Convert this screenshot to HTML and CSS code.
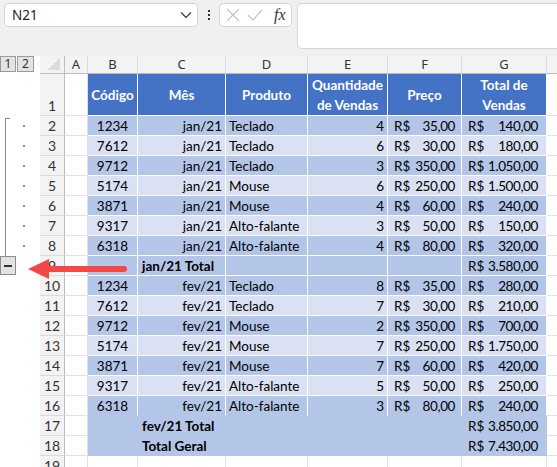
FILE: index.html
```html
<!DOCTYPE html>
<html lang="pt-BR">
<head>
  <meta charset="UTF-8">
  <meta name="viewport" content="width=device-width, initial-scale=1.0">
  <title>Vendas - Subtotais</title>
  <link rel="stylesheet" href="styles.css">
</head>
<body>
  <div class="topbar">
    <div class="namebox">
      <span>N21</span>
      <svg class="chev" width="12" height="8" viewBox="0 0 12 8"><path d="M1 1.5 L6 6.5 L11 1.5" fill="none" stroke="#333" stroke-width="1.2"/></svg>
    </div>
    <div class="vdots"><i></i><i></i><i></i></div>
    <div class="fxbox">
      <svg width="14" height="14" viewBox="0 0 14 14"><path d="M1 1 L13 13 M13 1 L1 13" stroke="#c4c4c4" stroke-width="1.2"/></svg>
      <svg width="16" height="14" viewBox="0 0 16 14"><path d="M1 7 L6 12 L15 2" fill="none" stroke="#c4c4c4" stroke-width="1.2"/></svg>
      <span class="fx">fx</span>
    </div>
    <div class="formula"></div>
  </div>

  <div class="sheet">
    <div class="row colhdr">
      <div class="ol levels"><span class="lvl">1</span><span class="lvl">2</span></div>
      <div class="corner"></div>
      <div class="ch">A</div><div class="ch">B</div><div class="ch">C</div><div class="ch">D</div>
      <div class="ch">E</div><div class="ch">F</div><div class="ch">G</div><div class="ch"></div>
    </div>

    <div class="row tall">
      <div class="ol"></div>
      <div class="rh">1</div>
      <div class="c"></div>
      <div class="c hd">Código</div>
      <div class="c hd">Mês</div>
      <div class="c hd">Produto</div>
      <div class="c hd">Quantidade<br>de Vendas</div>
      <div class="c hd">Preço</div>
      <div class="c hd">Total de<br>Vendas</div>
      <div class="c"></div>
    </div>

    <div class="row">
      <div class="ol grp first"><span class="dot"></span></div>
      <div class="rh">2</div><div class="c"></div>
      <div class="c dk ctr">1234</div><div class="c dk r">jan/21</div><div class="c dk">Teclado</div><div class="c dk r">4</div>
      <div class="c dk acc"><span>R$</span><span>35,00</span></div><div class="c dk acc tot"><span>R$</span><span>140,00</span></div>
      <div class="c"></div>
    </div>
    <div class="row">
      <div class="ol grp"><span class="dot"></span></div>
      <div class="rh">3</div><div class="c"></div>
      <div class="c lt ctr">7612</div><div class="c lt r">jan/21</div><div class="c lt">Teclado</div><div class="c lt r">6</div>
      <div class="c lt acc"><span>R$</span><span>30,00</span></div><div class="c lt acc tot"><span>R$</span><span>180,00</span></div>
      <div class="c"></div>
    </div>
    <div class="row">
      <div class="ol grp"><span class="dot"></span></div>
      <div class="rh">4</div><div class="c"></div>
      <div class="c dk ctr">9712</div><div class="c dk r">jan/21</div><div class="c dk">Teclado</div><div class="c dk r">3</div>
      <div class="c dk acc"><span>R$</span><span>350,00</span></div><div class="c dk acc tot"><span>R$</span><span>1.050,00</span></div>
      <div class="c"></div>
    </div>
    <div class="row">
      <div class="ol grp"><span class="dot"></span></div>
      <div class="rh">5</div><div class="c"></div>
      <div class="c lt ctr">5174</div><div class="c lt r">jan/21</div><div class="c lt">Mouse</div><div class="c lt r">6</div>
      <div class="c lt acc"><span>R$</span><span>250,00</span></div><div class="c lt acc tot"><span>R$</span><span>1.500,00</span></div>
      <div class="c"></div>
    </div>
    <div class="row">
      <div class="ol grp"><span class="dot"></span></div>
      <div class="rh">6</div><div class="c"></div>
      <div class="c dk ctr">3871</div><div class="c dk r">jan/21</div><div class="c dk">Mouse</div><div class="c dk r">4</div>
      <div class="c dk acc"><span>R$</span><span>60,00</span></div><div class="c dk acc tot"><span>R$</span><span>240,00</span></div>
      <div class="c"></div>
    </div>
    <div class="row">
      <div class="ol grp"><span class="dot"></span></div>
      <div class="rh">7</div><div class="c"></div>
      <div class="c lt ctr">9317</div><div class="c lt r">jan/21</div><div class="c lt">Alto-falante</div><div class="c lt r">3</div>
      <div class="c lt acc"><span>R$</span><span>50,00</span></div><div class="c lt acc tot"><span>R$</span><span>150,00</span></div>
      <div class="c"></div>
    </div>
    <div class="row">
      <div class="ol grp"><span class="dot"></span></div>
      <div class="rh">8</div><div class="c"></div>
      <div class="c dk ctr">6318</div><div class="c dk r">jan/21</div><div class="c dk">Alto-falante</div><div class="c dk r">4</div>
      <div class="c dk acc"><span>R$</span><span>80,00</span></div><div class="c dk acc tot"><span>R$</span><span>320,00</span></div>
      <div class="c"></div>
    </div>
    <div class="row">
      <div class="ol"><span class="collapse"></span></div>
      <div class="rh">9</div><div class="c"></div>
      <div class="c dk"></div><div class="c dk b">jan/21 Total</div><div class="c dk"></div><div class="c dk"></div>
      <div class="c dk"></div><div class="c dk acc tot"><span>R$</span><span>3.580,00</span></div>
      <div class="c"></div>
    </div>

    <div class="row">
      <div class="ol"></div>
      <div class="rh">10</div><div class="c"></div>
      <div class="c dk ctr">1234</div><div class="c dk r">fev/21</div><div class="c dk">Teclado</div><div class="c dk r">8</div>
      <div class="c dk acc"><span>R$</span><span>35,00</span></div><div class="c dk acc tot"><span>R$</span><span>280,00</span></div>
      <div class="c"></div>
    </div>
    <div class="row">
      <div class="ol"></div>
      <div class="rh">11</div><div class="c"></div>
      <div class="c lt ctr">7612</div><div class="c lt r">fev/21</div><div class="c lt">Teclado</div><div class="c lt r">7</div>
      <div class="c lt acc"><span>R$</span><span>30,00</span></div><div class="c lt acc tot"><span>R$</span><span>210,00</span></div>
      <div class="c"></div>
    </div>
    <div class="row">
      <div class="ol"></div>
      <div class="rh">12</div><div class="c"></div>
      <div class="c dk ctr">9712</div><div class="c dk r">fev/21</div><div class="c dk">Mouse</div><div class="c dk r">2</div>
      <div class="c dk acc"><span>R$</span><span>350,00</span></div><div class="c dk acc tot"><span>R$</span><span>700,00</span></div>
      <div class="c"></div>
    </div>
    <div class="row">
      <div class="ol"></div>
      <div class="rh">13</div><div class="c"></div>
      <div class="c lt ctr">5174</div><div class="c lt r">fev/21</div><div class="c lt">Mouse</div><div class="c lt r">7</div>
      <div class="c lt acc"><span>R$</span><span>250,00</span></div><div class="c lt acc tot"><span>R$</span><span>1.750,00</span></div>
      <div class="c"></div>
    </div>
    <div class="row">
      <div class="ol"></div>
      <div class="rh">14</div><div class="c"></div>
      <div class="c dk ctr">3871</div><div class="c dk r">fev/21</div><div class="c dk">Mouse</div><div class="c dk r">7</div>
      <div class="c dk acc"><span>R$</span><span>60,00</span></div><div class="c dk acc tot"><span>R$</span><span>420,00</span></div>
      <div class="c"></div>
    </div>
    <div class="row">
      <div class="ol"></div>
      <div class="rh">15</div><div class="c"></div>
      <div class="c lt ctr">9317</div><div class="c lt r">fev/21</div><div class="c lt">Alto-falante</div><div class="c lt r">5</div>
      <div class="c lt acc"><span>R$</span><span>50,00</span></div><div class="c lt acc tot"><span>R$</span><span>250,00</span></div>
      <div class="c"></div>
    </div>
    <div class="row">
      <div class="ol"></div>
      <div class="rh">16</div><div class="c"></div>
      <div class="c dk nb ctr">6318</div><div class="c dk nb r">fev/21</div><div class="c dk nb">Alto-falante</div><div class="c dk nb r">3</div>
      <div class="c dk nb acc"><span>R$</span><span>80,00</span></div><div class="c dk nb acc tot"><span>R$</span><span>240,00</span></div>
      <div class="c"></div>
    </div>
    <div class="row">
      <div class="ol"></div>
      <div class="rh">17</div><div class="c"></div>
      <div class="c dk flat"></div><div class="c dk flat b">fev/21 Total</div><div class="c dk flat"></div><div class="c dk flat"></div>
      <div class="c dk flat"></div><div class="c dk flat acc tot"><span>R$</span><span>3.850,00</span></div>
      <div class="c"></div>
    </div>
    <div class="row">
      <div class="ol"></div>
      <div class="rh">18</div><div class="c"></div>
      <div class="c dk flat"></div><div class="c dk flat b">Total Geral</div><div class="c dk flat"></div><div class="c dk flat"></div>
      <div class="c dk flat"></div><div class="c dk flat acc tot"><span>R$</span><span>7.430,00</span></div>
      <div class="c"></div>
    </div>
    <div class="row">
      <div class="ol"></div>
      <div class="rh">19</div><div class="c"></div>
      <div class="c"></div><div class="c"></div><div class="c"></div><div class="c"></div>
      <div class="c"></div><div class="c"></div><div class="c"></div>
    </div>

    <svg class="arrow" width="104" height="22" viewBox="0 0 104 22">
      <path d="M18 11 L97 11" stroke="#f24848" stroke-width="6" stroke-linecap="round"/>
      <path d="M1 11 L22 1 L22 21 Z" fill="#f24848"/>
    </svg>
  </div>
</body>
</html>
```

FILE: styles.css
```css
body {
  margin: 0;
  font-family: Lato, "Liberation Sans", sans-serif;
  font-size: 13.5px;
  color: #000;
  background-color: #fff;
  overflow: hidden;
}

/* formula bar */
.topbar {
  height: 56px;
  background-color: #f0f0f0;
  display: flex;
  align-items: flex-start;
  padding-top: 3px;
  box-sizing: border-box;
  font-family: "Noto Sans", sans-serif;
}

.namebox {
  margin-left: 4px;
  width: 194px;
  height: 24px;
  box-sizing: border-box;
  background-color: #fff;
  border: 1px solid #d6d6d6;
  border-radius: 4px;
  display: flex;
  align-items: center;
  justify-content: space-between;
  padding: 0 5px 0 7px;
  font-size: 13.5px;
  color: #222;
}

.vdots {
  width: 21px;
  height: 24px;
  display: flex;
  flex-direction: column;
  align-items: center;
  justify-content: center;
  gap: 2px;
}

.vdots i {
  width: 2px;
  height: 2px;
  background-color: #333;
}

.fxbox {
  width: 73px;
  height: 24px;
  box-sizing: border-box;
  background-color: #fff;
  border: 1px solid #d6d6d6;
  border-radius: 4px;
  display: flex;
  align-items: center;
  gap: 7px;
  padding-left: 6px;
}

.fx {
  font-family: "Liberation Serif", serif;
  font-style: italic;
  font-size: 16px;
  color: #333;
  margin-left: 4px;
}

.formula {
  margin-left: 5px;
  flex: 1;
  height: 44px;
  background-color: #fff;
  border: 1px solid #d6d6d6;
  border-right: none;
  border-radius: 5px 0 0 5px;
}

/* grid */
.sheet {
  position: relative;
  --cols: 40px 25px 23px 50px 88px 82px 80px 74px 85px 30px;
}

.row {
  display: grid;
  grid-template-columns: var(--cols);
  height: 20px;
}

.row.colhdr {
  height: 18px;
}

.row.tall {
  height: 42px;
}

.row > div {
  box-sizing: border-box;
  white-space: nowrap;
}

.ol {
  position: relative;
  background-color: #fff;
}

.levels {
  display: flex;
  gap: 1px;
  align-items: flex-start;
}

.lvl {
  width: 16px;
  height: 16px;
  box-sizing: border-box;
  border: 1px solid #9a9a9a;
  background-color: #e3e3e3;
  font-family: "Noto Sans", sans-serif;
  font-size: 12px;
  line-height: 14px;
  text-align: center;
  color: #333;
}

.lvl + .lvl {
  width: 17px;
}

.grp::before {
  content: "";
  position: absolute;
  left: 5px;
  top: 0;
  bottom: 0;
  width: 1px;
  background-color: #8c8c8c;
}

.grp.first::before {
  top: 2px;
}

.grp.first::after {
  content: "";
  position: absolute;
  left: 5px;
  top: 2px;
  width: 5px;
  height: 1px;
  background-color: #8c8c8c;
}

.dot {
  position: absolute;
  left: 23px;
  top: 9px;
  width: 2px;
  height: 2px;
  background-color: #8c8c8c;
}

.collapse {
  position: absolute;
  left: 0;
  top: 0;
  width: 16px;
  height: 19px;
  box-sizing: border-box;
  border: 1px solid #8c8c8c;
  background-color: #e3e3e3;
}

.collapse::after {
  content: "";
  position: absolute;
  left: 3px;
  top: 8px;
  width: 8px;
  height: 2px;
  background-color: #333;
}

.corner {
  background-color: #f3f3f3;
  border-right: 1px solid #bdbdbd;
  border-bottom: 1px solid #bdbdbd;
  position: relative;
}

.corner::after {
  content: "";
  position: absolute;
  right: 4px;
  bottom: 3px;
  width: 12px;
  height: 12px;
  background: linear-gradient(135deg, transparent 50%, #dcdcdc 50%);
}

.ch {
  background-color: #f3f3f3;
  border-right: 1px solid #dadada;
  border-bottom: 1px solid #bdbdbd;
  text-align: center;
  font-family: "Noto Sans", sans-serif;
  font-size: 13px;
  line-height: 17px;
  color: #333;
}

.rh {
  background-color: #f3f3f3;
  border-right: 1px solid #bdbdbd;
  border-bottom: 1px solid #dadada;
  display: flex;
  align-items: flex-end;
  justify-content: center;
  font-size: 14px;
  line-height: 19px;
  color: #333;
}

/* cells */
.c {
  border-right: 1px solid #e1e1e1;
  border-bottom: 1px solid #e1e1e1;
  padding: 0 3px;
  display: flex;
  align-items: center;
  line-height: 18px;
}

.hd {
  background-color: #4472c4;
  color: #fff;
  font-weight: bold;
  justify-content: center;
  text-align: center;
  border-color: #fff;
  line-height: 20px;
}

.dk {
  background-color: #b4c6e7;
  border-color: #fff;
}

.lt {
  background-color: #d9e1f2;
  border-color: #fff;
}

.nb {
  border-bottom-color: #b4c6e7;
}

.flat {
  border-color: #b4c6e7;
}

.ctr {
  justify-content: center;
}

.r {
  justify-content: flex-end;
}

.b {
  font-weight: bold;
  overflow: visible;
  padding-left: 4px;
}

.acc {
  justify-content: space-between;
  padding: 0 6px 0 6px;
}

.acc span:last-child {
  letter-spacing: -0.4px;
}

.acc.tot {
  padding: 0 8px 0 6px;
}

.arrow {
  position: absolute;
  left: 27px;
  top: 202px;
}
```
